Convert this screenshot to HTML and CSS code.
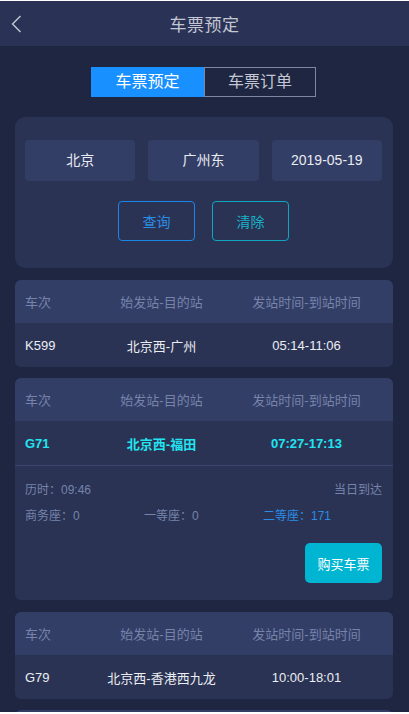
FILE: index.html
```html
<!DOCTYPE html>
<html lang="zh-CN">
<head>
    <meta charset="UTF-8">
    <meta name="viewport" content="width=device-width, initial-scale=1.0">
    <title>车票预定</title>
    <link rel="stylesheet" href="styles.css">
</head>
<body>

<div class="page">
    <div class="topbar">
        <div class="back">
            <svg width="12" height="20" viewBox="0 0 12 20">
                <polyline points="9.5,2 1.5,10 9.5,18" fill="none" stroke="#c9cdd8" stroke-width="1.3"/>
            </svg>
        </div>
        <div class="title">车票预定</div>
        <div></div>
    </div>

    <div class="tabs">
        <div class="tab active">车票预定</div>
        <div class="tab">车票订单</div>
    </div>

    <div class="search-card">
        <div class="inputs">
            <div class="input">北京</div>
            <div class="input">广州东</div>
            <div class="input">2019-05-19</div>
        </div>
        <div class="actions">
            <button class="btn btn-query">查询</button>
            <button class="btn btn-clear">清除</button>
        </div>
    </div>

    <div id="results">
        <!-- result cards are added here -->
    </div>
</div>

<script>
    const trains = [
        { no: 'K599', route: '北京西-广州', time: '05:14-11:06' },
        { no: 'G71', route: '北京西-福田', time: '07:27-17:13', open: true,
          duration: '09:46', arrive: '当日到达', business: 0, first: 0, second: 171 },
        { no: 'G79', route: '北京西-香港西九龙', time: '10:00-18:01' }
    ];

    const results = document.getElementById('results');
    trains.forEach(t => {
        const card = document.createElement('div');
        card.className = 'result-card' + (t.open ? ' open' : '');
        let html = `
            <div class="row head">
                <span>车次</span>
                <span class="center">始发站-目的站</span>
                <span class="center">发站时间-到站时间</span>
            </div>
            <div class="row body">
                <span>${t.no}</span>
                <span class="center">${t.route}</span>
                <span class="center">${t.time}</span>
            </div>
        `;
        if (t.open) {
            html += `
            <div class="detail">
                <div class="line">
                    <span>历时：${t.duration}</span>
                    <span>${t.arrive}</span>
                </div>
                <div class="seats">
                    <span>商务座：${t.business}</span>
                    <span>一等座：${t.first}</span>
                    <span class="has">二等座：${t.second}</span>
                </div>
                <div class="buy-wrap">
                    <button class="buy">购买车票</button>
                </div>
            </div>
            `;
        }
        card.innerHTML = html;
        results.appendChild(card);
    });

    const more = document.createElement('div');
    more.className = 'result-card loading';
    results.appendChild(more);
</script>

</body>
</html>
```

FILE: styles.css
```css
body {
    margin: 0;
    background-color: #fff;
    font-family: "Liberation Sans", "Noto Sans CJK SC", sans-serif;
}

.page {
    margin-top: 1px;
    height: 711px;
    overflow: hidden;
    background-color: #1f2642;
}

.topbar {
    height: 45px;
    background-color: #2a3356;
    display: grid;
    grid-template-columns: 50px 1fr 50px;
    align-items: center;
}

.back {
    padding-left: 11px;
    display: flex;
    align-items: center;
    padding-top: 1px;
}

.title {
    text-align: center;
    color: #c3c7d3;
    font-size: 17px;
    letter-spacing: 0.5px;
}

.tabs {
    display: flex;
    justify-content: center;
    margin-top: 21px;
    margin-right: 2px;
}

.tab {
    width: 110px;
    height: 28px;
    line-height: 28px;
    text-align: center;
    font-size: 16px;
    color: #c3c7d3;
    border: 1px solid #7d87a3;
}

.tab.active {
    width: 111px;
    background-color: #1890ff;
    border-color: #1890ff;
    color: #fff;
}

.search-card {
    margin: 20px 16px 0 15px;
    padding: 23px 11px 27px 10px;
    background-color: #2a3354;
    border-radius: 10px;
}

.inputs {
    display: grid;
    grid-template-columns: 1fr 1fr 1fr;
    gap: 13px;
}

.input {
    height: 41px;
    line-height: 41px;
    text-align: center;
    background-color: #333e66;
    border-radius: 4px;
    color: #e9ebf1;
    font-size: 14px;
}

.actions {
    display: flex;
    justify-content: center;
    gap: 17px;
    margin-top: 20px;
}

.btn {
    width: 77px;
    height: 40px;
    background: transparent;
    border-radius: 4px;
    font-family: inherit;
    font-size: 14px;
    cursor: pointer;
}

.btn-query {
    border: 1px solid #1a86e8;
    color: #2b8de6;
}

.btn-clear {
    border: 1px solid #11a6c0;
    color: #18b2c9;
}

.result-card {
    margin: 12px 16px 0 15px;
    background-color: #2a3354;
    border-radius: 6px;
    overflow: hidden;
}

.result-card + .result-card {
    margin-top: 11px;
}

.result-card.open + .result-card {
    margin-top: 12px;
}

.result-card.loading {
    height: 40px;
    background-color: #333e66;
}

.row {
    display: grid;
    grid-template-columns: 64px 145px 145px;
    align-items: center;
    padding: 0 10px;
    font-size: 13px;
}

.row .center {
    text-align: center;
}

.row.head {
    height: 43px;
    background-color: #333e66;
    color: #7683ab;
}

.row.body {
    height: 44px;
    color: #eceef3;
}

.open .row.body {
    color: #22e4f0;
    font-weight: bold;
}

.detail {
    border-top: 1px solid #3a4570;
    padding: 15px 11px 17px 10px;
    font-size: 12px;
    color: #7683ab;
}

.line {
    display: flex;
    justify-content: space-between;
    line-height: 18px;
}

.seats {
    display: grid;
    grid-template-columns: 1fr 1fr 1fr;
    line-height: 18px;
    margin-top: 8px;
}

.seats .has {
    color: #2a8de6;
}

.buy-wrap {
    display: flex;
    justify-content: flex-end;
    margin-top: 18px;
}

.buy {
    width: 77px;
    height: 40px;
    border: none;
    border-radius: 5px;
    background-color: #00b5d1;
    color: #fff;
    font-family: inherit;
    font-size: 13px;
}
```
